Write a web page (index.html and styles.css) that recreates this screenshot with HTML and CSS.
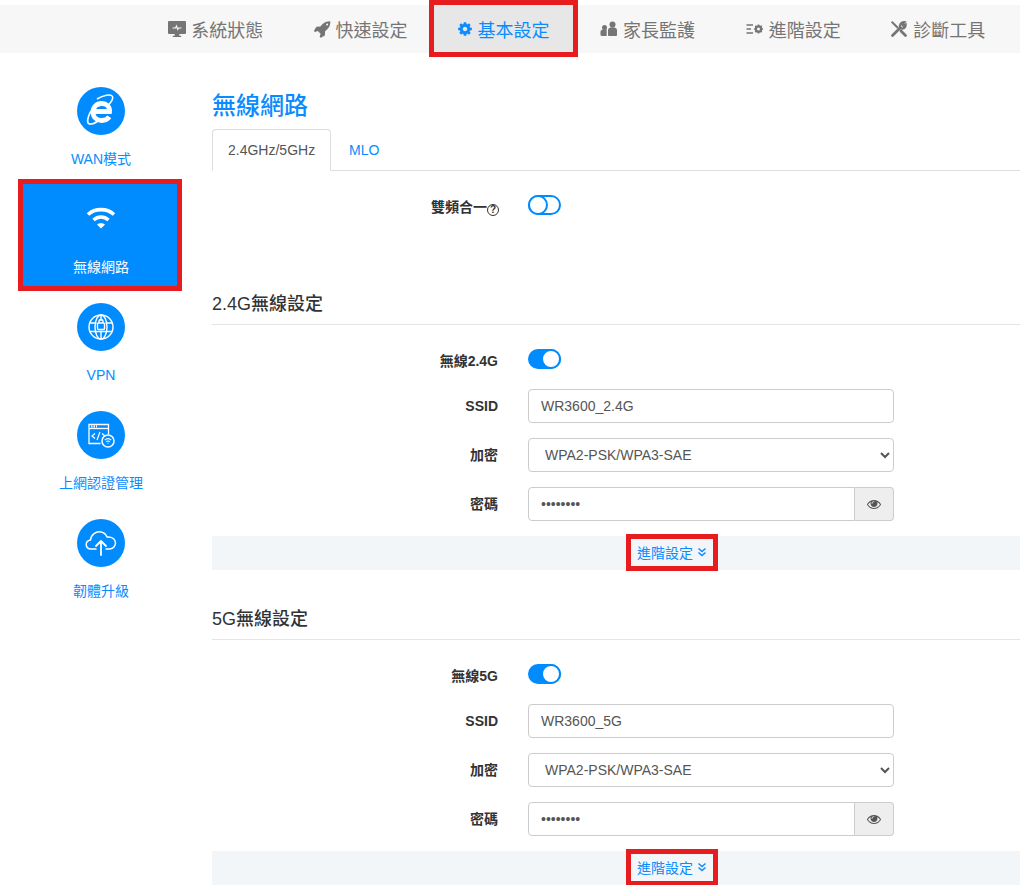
FILE: index.html
```html
<!DOCTYPE html>
<html lang="zh-Hant">
<head>
  <meta charset="UTF-8" />
  <title>無線網路</title>
  <link rel="stylesheet" href="styles.css">
</head>
<body>

<div class="topbar">
  <a class="nav-item">
    <svg class="nav-icon" viewBox="0 0 18 18"><path fill="currentColor" d="M1 1h16a1 1 0 0 1 1 1v11a1 1 0 0 1-1 1h-5.700v1.700h1.900V17H4.800v-1.300h1.900V14H1a1 1 0 0 1-1-1V2a1 1 0 0 1 1-1z"/><path fill="none" stroke="#f7f7f7" stroke-width="1.200" d="M4.500 8h3l1-2 1.200 3.400.9-1.400h2.900"/></svg>
    系統狀態
  </a>
  <a class="nav-item">
    <svg class="nav-icon" viewBox="0 0 1792 1792"><path fill="currentColor" d="M1504 448q0-40-28-68t-68-28-68 28-28 68 28 68 68 28 68-28 28-68zm224-288q0 249-75.500 430.500t-253.500 360.500q-81 80-195 176l-20 379q-2 16-16 26l-384 224q-7 4-16 4-12 0-23-9l-64-64q-13-14-8-32l85-276-281-281-276 85q-3 1-9 1-14 0-23-9l-64-64q-17-19-5-39l224-384q10-14 26-16l379-20q96-114 176-195 188-187 358-258t431-71q14 0 24 9.500t10 22.500z"/></svg>
    快速設定
  </a>
  <a class="nav-item active mark">
    <svg class="nav-icon cog" viewBox="0 0 1792 1792"><path fill="currentColor" d="M1152 896q0-106-75-181t-181-75-181 75-75 181 75 181 181 75 181-75 75-181zm512-109v222q0 12-8 23t-20 13l-185 28q-19 54-39 91 35 50 107 138 10 12 10 25t-9 23q-27 37-99 108t-94 71q-12 0-26-9l-138-108q-44 23-91 38-16 136-29 186-7 28-36 28h-222q-14 0-24.500-8.500t-11.500-21.500l-28-184q-49-16-90-37l-141 107q-10 9-25 9-14 0-25-11-126-114-165-168-7-10-7-23 0-12 8-23 15-21 51-66.500t54-70.500q-27-50-41-99l-183-27q-13-2-21-12.500t-8-23.500v-222q0-12 8-23t19-13l186-28q14-46 39-92-40-57-107-138-10-12-10-24 0-10 9-23 26-36 98.500-107.500t94.500-71.500q13 0 26 10l138 107q44-23 91-38 16-136 29-186 7-28 36-28h222q14 0 24.500 8.500t11.500 21.500l28 184q49 16 90 37l142-107q9-9 24-9 13 0 25 10 129 119 165 170 7 8 7 22 0 12-8 23-15 21-51 66.500t-54 70.500q26 50 41 98l183 28q13 2 21 12.500t8 23.500z"/></svg>
    基本設定
  </a>
  <a class="nav-item users">
    <svg class="nav-icon" viewBox="0 0 18 18"><g fill="currentColor"><circle cx="4.500" cy="7.500" r="2.500"/><circle cx="12.500" cy="4.500" r="3"/><path d="M.5 12c0-1.800 1.400-2.800 4-2.800 1 0 1.600.1 2.200.4V16H1.700c-.8 0-1.200-.5-1.200-1.200z"/><path d="M8 10c0-1.700 1.600-2.800 4.500-2.800S17 8.300 17 10v4.800c0 .8-.5 1.200-1.200 1.200H9.200C8.500 16 8 15.600 8 14.800z"/></g></svg>
    家長監護
  </a>
  <a class="nav-item">
    <svg class="nav-icon" viewBox="0 0 18 18"><g fill="none" stroke="currentColor"><path stroke-width="1.400" d="M.5 5h6.500M.5 9h4.500M.5 13h6.500"/><circle cx="12.500" cy="9" r="2.600" stroke-width="2.200"/><path stroke-width="1.700" d="M12.500 4.500V6M12.500 12v1.500M8 9h1.500M15.500 9H17M9.300 5.800l1.100 1.100M14.600 11.100l1.100 1.100M9.300 12.200l1.100-1.100M14.600 6.900l1.100-1.100"/></g></svg>
    進階設定
  </a>
  <a class="nav-item">
    <svg class="nav-icon" viewBox="0 0 18 18"><g fill="none" stroke="currentColor" stroke-linecap="round"><path stroke-width="2.800" d="M2.500 15.500 10.500 7.500"/><path stroke-width="2.200" d="M10.300 7.700c-1.200-2.500.6-5.700 4-5.500l-2 2.300 1.200 1.500 2.200-1.500c.4 3.200-2.700 4.800-5.400 3.700z"/><path stroke-width="2.800" d="M11 11l4.500 4.500"/><path stroke-width="2" d="M2.200 2.200l5.300 5.300"/></g></svg>
    診斷工具
  </a>
</div>

<div class="page">
  <div class="sidebar">
    <a class="side-item">
      <span class="side-circle">
        <svg viewBox="0 0 48 48" class="side-icon"><g fill="none" stroke="#fff"><path stroke-width="4.800" d="M16 24.500h16.500c.5-5-3-8-7.700-8-5.300 0-8.800 3.500-8.800 8.500 0 5 3.500 8.500 8.800 8.500 3.300 0 5.800-1.200 7.500-3.600"/><path stroke-width="1.600" d="M20 12c6-3.500 14-5.500 15.500-2.500 1 2-1 5-3.500 8M14 24c-3 5-4.500 11-2.500 12.500 2 1.300 6-.2 9.500-2.500"/></g></svg>
      </span>
      <span class="side-label">WAN模式</span>
    </a>
    <a class="side-item current mark">
      <span class="side-circle">
        <svg viewBox="0 0 48 48" class="side-icon"><g fill="none" stroke="#fff" stroke-width="3.600"><path d="M11 19.500c7-6.500 19-6.500 26 0"/><path d="M16.500 25c4.500-4 10.500-4 15 0"/></g><path fill="#fff" d="M20 29.500c2.300-1.800 5.700-1.800 8 0L24 33.500z"/></svg>
      </span>
      <span class="side-label">無線網路</span>
    </a>
    <a class="side-item">
      <span class="side-circle">
        <svg viewBox="0 0 48 48" class="side-icon"><g fill="none" stroke="#fff" stroke-width="1.400"><circle cx="24" cy="24" r="12"/><ellipse cx="24" cy="24" rx="6" ry="12"/><path d="M12.500 20h7M28.500 20h7M12.500 28.500h23M24 12v6M24 29v7"/><rect x="20.500" y="20" width="7" height="6.500" rx="1"/><path d="M22 20v-1.500a2 2 0 0 1 4 0V20"/></g></svg>
      </span>
      <span class="side-label">VPN</span>
    </a>
    <a class="side-item">
      <span class="side-circle">
        <svg viewBox="0 0 48 48" class="side-icon"><g fill="none" stroke="#fff"><path stroke-width="1.300" d="M31.500 23V13.500h-19.500v19h11.500"/><path stroke-width="1.300" d="M12 17.500h19.500"/><path stroke-width="1.800" stroke-dasharray="1.500 1" d="M14 15.500h6"/><path stroke-width="1.200" d="M18 22.500l-3 2.500 3 2.500M25 22.500l3 2.500-3 2.500M23 21l-3 8"/><circle cx="31" cy="30" r="6" stroke-width="1.500" fill="#008cff"/><path stroke-width="1.100" d="M27.800 29c2-1.700 4.400-1.700 6.400 0M29.300 30.700c1-.8 2.400-.8 3.400 0M30.500 32.300h1"/></g></svg>
      </span>
      <span class="side-label">上網認證管理</span>
    </a>
    <a class="side-item">
      <span class="side-circle">
        <svg viewBox="0 0 48 48" class="side-icon"><g fill="none" stroke="#fff" stroke-width="1.500" stroke-linecap="round" stroke-linejoin="round"><path d="M19 30h-5c-6 0-6.500-8-.5-9 .5-5.500 5.500-9 10.500-8 3 .6 5 2.500 6 5 5.500-.5 8.500 2.500 8.500 6 0 3-2.500 6-6 6H29"/><path stroke-width="1.800" d="M24 36V22M19 27l5-5 5 5"/></g></svg>
      </span>
      <span class="side-label">韌體升級</span>
    </a>
  </div>

  <div class="main">
    <h2 class="title">無線網路</h2>
    <div class="tabs">
      <a class="tab selected">2.4GHz/5GHz</a>
      <a class="tab">MLO</a>
    </div>

    <div class="form-row switch-row first-row">
      <label class="form-label">雙頻合一<span class="help">?</span></label>
      <span class="switch"></span>
    </div>

    <h3 class="section-title section-24">2.4G無線設定</h3>
    <div class="form-row switch-row">
      <label class="form-label">無線2.4G</label>
      <span class="switch on"></span>
    </div>
    <div class="form-row">
      <label class="form-label">SSID</label>
      <input class="field" type="text" value="WR3600_2.4G">
    </div>
    <div class="form-row">
      <label class="form-label">加密</label>
      <select class="field"><option>WPA2-PSK/WPA3-SAE</option></select>
    </div>
    <div class="form-row">
      <label class="form-label">密碼</label>
      <div class="pass-group">
        <input class="field" type="password" value="12345678">
        <span class="eye-btn">
          <svg viewBox="0 0 1792 1792"><path fill="currentColor" d="M1664 960q-152-236-381-353 61 104 61 225 0 185-131.500 316.500t-316.500 131.500-316.500-131.500-131.500-316.500q0-121 61-225-229 117-381 353 133 205 333.500 326.500t434.500 121.500 434.500-121.500 333.500-326.500zm-720-384q0-20-14-34t-34-14q-125 0-214.500 89.500t-89.500 214.500q0 20 14 34t34 14 34-14 14-34q0-86 61-147t147-61q20 0 34-14t14-34zm848 384q0 34-20 69-140 230-376.500 368.500t-499.500 138.500-499.500-139-376.500-368q-20-35-20-69t20-69q140-229 376.500-368t499.500-139 499.500 139 376.500 368q20 35 20 69z"/></svg>
        </span>
      </div>
    </div>
    <div class="more-bar">
      <a class="more-link mark">進階設定
        <svg viewBox="0 0 10 10"><path fill="none" stroke="currentColor" stroke-width="1.500" d="M1.500 1.500 5 4.500l3.500-3M1.500 5.500 5 8.500l3.500-3"/></svg>
      </a>
    </div>

    <h3 class="section-title">5G無線設定</h3>
    <div class="form-row switch-row">
      <label class="form-label">無線5G</label>
      <span class="switch on"></span>
    </div>
    <div class="form-row">
      <label class="form-label">SSID</label>
      <input class="field" type="text" value="WR3600_5G">
    </div>
    <div class="form-row">
      <label class="form-label">加密</label>
      <select class="field"><option>WPA2-PSK/WPA3-SAE</option></select>
    </div>
    <div class="form-row">
      <label class="form-label">密碼</label>
      <div class="pass-group">
        <input class="field" type="password" value="12345678">
        <span class="eye-btn">
          <svg viewBox="0 0 1792 1792"><path fill="currentColor" d="M1664 960q-152-236-381-353 61 104 61 225 0 185-131.500 316.500t-316.500 131.500-316.500-131.500-131.500-316.500q0-121 61-225-229 117-381 353 133 205 333.500 326.500t434.500 121.500 434.500-121.500 333.500-326.500zm-720-384q0-20-14-34t-34-14q-125 0-214.500 89.500t-89.500 214.500q0 20 14 34t34 14 34-14 14-34q0-86 61-147t147-61q20 0 34-14t14-34zm848 384q0 34-20 69-140 230-376.500 368.500t-499.500 138.500-499.500-139-376.500-368q-20-35-20-69t20-69q140-229 376.500-368t499.500-139 499.500 139 376.500 368q20 35 20 69z"/></svg>
        </span>
      </div>
    </div>
    <div class="more-bar">
      <a class="more-link mark">進階設定
        <svg viewBox="0 0 10 10"><path fill="none" stroke="currentColor" stroke-width="1.500" d="M1.500 1.500 5 4.500l3.500-3M1.500 5.500 5 8.500l3.500-3"/></svg>
      </a>
    </div>
  </div>
</div>

</body>
</html>
```

FILE: styles.css
```css
*, *::before, *::after {
  box-sizing: border-box;
}

body {
  margin: 0;
  background-color: #fff;
  color: #333;
  font-family: "Liberation Sans", "Noto Sans CJK TC", sans-serif;
  font-size: 14px;
  overflow: hidden;
}

/* red annotation boxes drawn on the screenshot */
.mark {
  position: relative;
}

.mark::after {
  content: "";
  position: absolute;
  border: 5px solid #e71c1f;
  pointer-events: none;
}

.topbar {
  display: grid;
  grid-template-columns: repeat(6, 1fr);
  height: 48px;
  margin-top: 5px;
  padding: 0 10px 0 143.500px;
  background-color: #f7f7f7;
}

.nav-item {
  display: flex;
  align-items: center;
  justify-content: center;
  gap: 5px;
  color: #757575;
  font-size: 18px;
}

.nav-icon {
  width: 18px;
  height: 18px;
}

.nav-icon.cog {
  width: 16px;
  height: 16px;
}

.nav-item.active {
  padding-right: 3px;
  background-color: #e7e7e7;
  color: #0a8cff;
}

.nav-item.users {
  padding-right: 3px;
}

.nav-item.active::after {
  top: -5px;
  bottom: -4px;
  left: -3px;
  right: -1px;
}

.page {
  display: flex;
}

.sidebar {
  flex: none;
  width: 212px;
  padding: 19px 30px 0 18px;
}

.side-item {
  display: flex;
  flex-direction: column;
  align-items: center;
  height: 108px;
  padding: 15px 0 0 2px;
  color: #0a8cff;
}

.side-item.current {
  background-color: #008cff;
  color: #fff;
}

.side-item.current::after {
  top: -1px;
  bottom: -3px;
  left: 0;
  right: 0;
}

.side-circle {
  width: 48px;
  height: 48px;
  border-radius: 50%;
  background-color: #008cff;
}

.side-icon {
  display: block;
  width: 48px;
  height: 48px;
}

.side-label {
  margin-top: 14px;
  line-height: 20px;
}

.main {
  flex: none;
  width: 808px;
}

.title {
  margin: 0;
  padding-top: 36px;
  color: #0a8cff;
  font-size: 24px;
  font-weight: 500;
  line-height: 34px;
}

.tabs {
  display: flex;
  height: 42px;
  margin-top: 6px;
  border-bottom: 1px solid #ddd;
}

.tab {
  height: 42px;
  padding: 0 18px;
  line-height: 42px;
  color: #0a8cff;
}

.tab.selected {
  padding: 0 15px;
  width: 119px;
  line-height: 40px;
  border: 1px solid #ddd;
  border-bottom-color: #fff;
  border-radius: 4px 4px 0 0;
  color: #555;
  text-align: center;
}

.form-row {
  display: grid;
  grid-template-columns: 286px 366px;
  column-gap: 30px;
  align-items: center;
  margin-top: 15px;
}

.switch-row {
  grid-template-rows: 20px;
  align-items: start;
  margin-top: 24px;
}

.switch-row + .form-row {
  margin-top: 20px;
}

.form-label {
  color: #333;
  font-size: 14px;
  font-weight: bold;
  line-height: 20px;
  text-align: right;
}

/* the labels next to a switch sit a little lower than the switch */
.switch-row .form-label {
  padding-top: 2px;
}

.help {
  display: inline-block;
  width: 12px;
  height: 12px;
  margin-right: -1px;
  border: 1px solid #333;
  border-radius: 50%;
  font-size: 10px;
  line-height: 10px;
  text-align: center;
  vertical-align: -1px;
}

.switch {
  position: relative;
  display: block;
  width: 33px;
  height: 20px;
  border: 2px solid #008cff;
  border-radius: 10px;
  background-color: #fff;
}

.switch::before {
  content: "";
  position: absolute;
  top: -2px;
  left: -2px;
  width: 20px;
  height: 20px;
  border: 2px solid #008cff;
  border-radius: 50%;
  background-color: #fff;
}

.switch.on {
  background-color: #008cff;
}

.switch.on::before {
  left: auto;
  right: -2px;
}

.field {
  width: 100%;
  height: 34px;
  padding: 0 12px;
  border: 1px solid #ccc;
  border-radius: 4px;
  background-color: #fff;
  color: #555;
  font-family: inherit;
  font-size: 14px;
}

.pass-group {
  display: flex;
}

.pass-group .field {
  flex: 1;
  min-width: 0;
  border-radius: 4px 0 0 4px;
}

.eye-btn {
  display: flex;
  align-items: center;
  justify-content: center;
  flex: none;
  width: 39px;
  height: 34px;
  border: 1px solid #ccc;
  border-left: 0;
  border-radius: 0 4px 4px 0;
  background-color: #eee;
  color: #555;
}

.eye-btn svg {
  width: 14px;
  height: 14px;
}

.more-bar {
  display: flex;
  justify-content: center;
  height: 34px;
  margin-top: 15px;
  padding-left: 112px;
  background-color: #f3f6f9;
}

.more-link {
  display: flex;
  align-items: center;
  gap: 4px;
  padding-bottom: 2px;
  color: #0a8cff;
}

.more-link svg {
  width: 10px;
  height: 10px;
}

.more-link::after {
  top: -2px;
  bottom: -1px;
  left: -11px;
  right: -11px;
}

.section-title {
  margin: 36px 0 0;
  padding: 1px 0 8px;
  border-bottom: 1px solid #e5e5e5;
  color: #333;
  font-size: 18px;
  font-weight: 500;
  line-height: 24px;
}

.section-24 {
  margin-top: 76px;
}
```
